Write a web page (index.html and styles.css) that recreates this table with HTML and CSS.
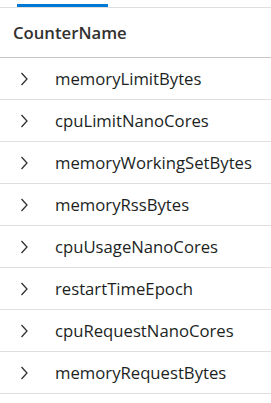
FILE: index.html
```html
<!DOCTYPE html>
<html>
<head>
<meta charset="utf-8">
<link rel="stylesheet" href="styles.css">
</head>
<body>
<div class="tabbar"><div class="tab-indicator"></div></div>
<div class="grid">
  <div class="header">CounterName</div>
  <div class="row"><span class="chev"><svg width="8" height="14" viewBox="0 0 8 14"><path d="M1.5 1 L7 7 L1.5 13" fill="none" stroke="#323130" stroke-width="1.3"/></svg></span><span class="name">memoryLimitBytes</span></div>
  <div class="row"><span class="chev"><svg width="8" height="14" viewBox="0 0 8 14"><path d="M1.5 1 L7 7 L1.5 13" fill="none" stroke="#323130" stroke-width="1.3"/></svg></span><span class="name">cpuLimitNanoCores</span></div>
  <div class="row"><span class="chev"><svg width="8" height="14" viewBox="0 0 8 14"><path d="M1.5 1 L7 7 L1.5 13" fill="none" stroke="#323130" stroke-width="1.3"/></svg></span><span class="name">memoryWorkingSetBytes</span></div>
  <div class="row"><span class="chev"><svg width="8" height="14" viewBox="0 0 8 14"><path d="M1.5 1 L7 7 L1.5 13" fill="none" stroke="#323130" stroke-width="1.3"/></svg></span><span class="name">memoryRssBytes</span></div>
  <div class="row"><span class="chev"><svg width="8" height="14" viewBox="0 0 8 14"><path d="M1.5 1 L7 7 L1.5 13" fill="none" stroke="#323130" stroke-width="1.3"/></svg></span><span class="name">cpuUsageNanoCores</span></div>
  <div class="row"><span class="chev"><svg width="8" height="14" viewBox="0 0 8 14"><path d="M1.5 1 L7 7 L1.5 13" fill="none" stroke="#323130" stroke-width="1.3"/></svg></span><span class="name">restartTimeEpoch</span></div>
  <div class="row"><span class="chev"><svg width="8" height="14" viewBox="0 0 8 14"><path d="M1.5 1 L7 7 L1.5 13" fill="none" stroke="#323130" stroke-width="1.3"/></svg></span><span class="name">cpuRequestNanoCores</span></div>
  <div class="row"><span class="chev"><svg width="8" height="14" viewBox="0 0 8 14"><path d="M1.5 1 L7 7 L1.5 13" fill="none" stroke="#323130" stroke-width="1.3"/></svg></span><span class="name">memoryRequestBytes</span></div>
</div>
</body>
</html>
```
FILE: styles.css
```css
html, body {
  margin: 0;
  padding: 0;
  background: #ffffff;
  font-family: "Open Sans", "Noto Sans", sans-serif;
  color: #201f1e;
}
.tabbar {
  height: 7px;
  border-bottom: 1px solid #e1dfdd;
  display: flex;
  align-items: flex-end;
}
.tab-indicator {
  margin-left: 17px;
  width: 91px;
  height: 3px;
  background: #0078d4;
}
.header {
  height: 49px;
  border-bottom: 1px solid #c8c6c4;
  display: flex;
  align-items: center;
  padding-left: 13px;
  font-size: 16.7px;
  font-weight: 600;
  color: #323130;
}
.row {
  height: 41px;
  border-bottom: 1px solid #e1dfdd;
  display: flex;
  align-items: center;
}
.chev {
  width: 8px;
  height: 14px;
  margin-left: 20px;
  display: flex;
}
.name {
  margin-left: 27px;
  font-size: 16.7px;
}
```
